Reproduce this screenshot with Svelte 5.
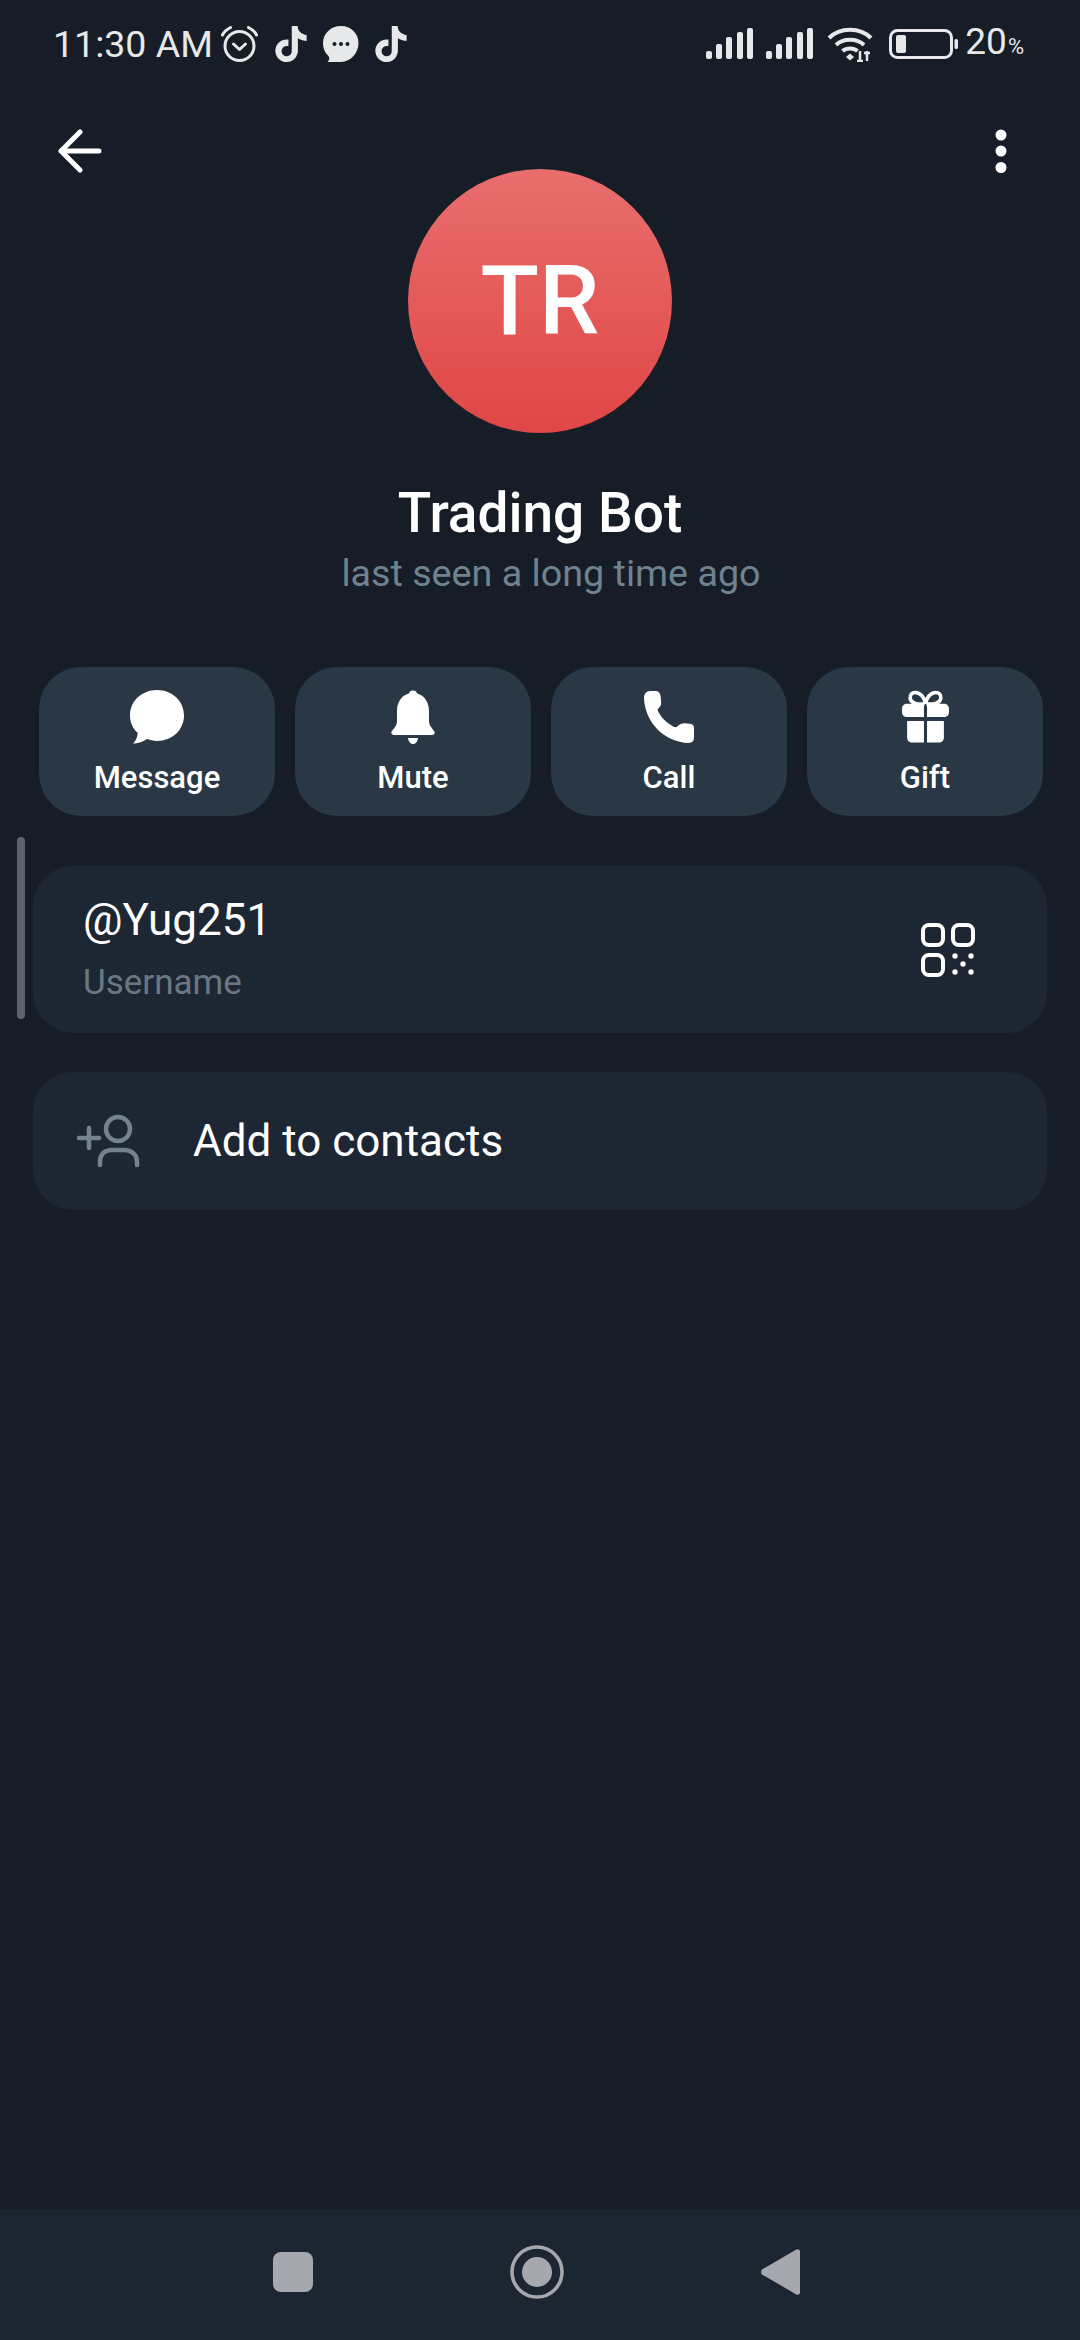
<script>
  const actions = ["Message", "Mute", "Call", "Gift"];
  const tiktok =
    "M12.525.02c1.31-.02 2.61-.01 3.91-.02.08 1.53.63 3.09 1.75 4.17 1.12 1.11 2.7 1.62 4.24 1.79v4.03c-1.44-.05-2.89-.35-4.2-.97-.57-.26-1.1-.59-1.62-.93-.01 2.92.01 5.84-.02 8.75-.08 1.4-.54 2.79-1.35 3.94-1.31 1.92-3.58 3.17-5.91 3.21-1.43.08-2.86-.31-4.08-1.03-2.02-1.19-3.44-3.37-3.65-5.71-.02-.5-.03-1-.01-1.49.18-1.9 1.12-3.72 2.58-4.96 1.66-1.44 3.98-2.13 6.15-1.72.02 1.48-.04 2.96-.04 4.44-.99-.32-2.15-.23-3.02.37-.63.41-1.11 1.04-1.36 1.75-.21.51-.15 1.07-.14 1.61.24 1.64 1.82 3.02 3.5 2.87 1.12-.01 2.19-.66 2.77-1.61.19-.33.4-.67.41-1.06.1-1.79.06-3.57.07-5.36.01-4.03-.01-8.05.02-12.07z";
  const bars = [
    { x: 0, h: 8 },
    { x: 10, h: 15 },
    { x: 20, h: 22 },
    { x: 31, h: 27 },
    { x: 41, h: 31 },
  ];
</script>

<div class="page">
  <div class="status">
    <div class="status-left">
      <span class="time">11:30 AM</span>
      <svg class="alarm" width="39" height="36" viewBox="0 0 38 36" fill="none" stroke="#e6e8ea">
        <circle cx="19" cy="20" r="14.5" stroke-width="3" />
        <path d="M2 9 C4 5 7 3 10 1.5 M36 9 C34 5 31 3 28 1.5" stroke-width="3" stroke-linecap="round" />
        <path d="M13 18 L19 23.5 L25 18" stroke-width="3" stroke-linecap="round" stroke-linejoin="round" />
      </svg>
      <svg class="tt" width="32" height="36" viewBox="1.5 0 21 24" fill="#e6e8ea"><path d={tiktok} /></svg>
      <svg width="36" height="36" viewBox="0 0 36 36">
        <path d="M18 0 C28 0 35.500 7.500 35.500 17 C35.500 27 28 35.500 18 36 H4.500 C6.500 34 6.800 32 5.500 30 C2 27 0 22.500 0 17 C0 7.500 8 0 18 0 Z" fill="#e6e8ea" />
        <circle cx="11.500" cy="18" r="2" fill="#161d26" />
        <circle cx="18" cy="18" r="2" fill="#161d26" />
        <circle cx="24.500" cy="18" r="2" fill="#161d26" />
      </svg>
      <svg class="tt" width="32" height="36" viewBox="1.5 0 21 24" fill="#e6e8ea"><path d={tiktok} /></svg>
    </div>
    <div class="status-right">
      {#each [1, 2] as n (n)}
        <svg class="signal" width="47" height="32" viewBox="0 0 47 32" fill="#e6e8ea">
          {#each bars as b (b.x)}
            <rect x={b.x} y={31 - b.h} width="6" height={b.h} rx="2" />
          {/each}
        </svg>
      {/each}
      <svg class="wifi" width="46" height="36" viewBox="0 0 46 36" fill="none" stroke="#e6e8ea" stroke-width="4">
        <path d="M2 12 C13 1 33 1 44 12" />
        <path d="M9 19 C16 12 30 12 37 19" />
        <path d="M15.500 25 C19.500 21.500 26.500 21.500 30.500 25" />
        <path d="M19 31 L23 27.500 L27 31 L23 34.500 Z" fill="#e6e8ea" stroke="none" />
        <path d="M34 24 V34 M37 34 L31 34 M41 34 V24 M38 26 H44" stroke-width="2.500" transform="translate(-1 1)" />
      </svg>
      <svg class="battery" width="69" height="30" viewBox="0 0 69 30">
        <rect x="1.500" y="1.500" width="61" height="27" rx="7" fill="none" stroke="#e6e8ea" stroke-width="3" />
        <rect x="7" y="6" width="10" height="18" rx="2" fill="#e6e8ea" />
        <rect x="65.500" y="10" width="3.500" height="10" rx="1.500" fill="#e6e8ea" />
      </svg>
      <span class="pct">20<small>%</small></span>
    </div>
  </div>

  <div class="toolbar">
    <svg width="44" height="44" viewBox="0 0 44 44" fill="none" stroke="#fff" stroke-width="5" stroke-linecap="round" stroke-linejoin="round">
      <path d="M3 22 H41 M22 3 L3 22 L22 41" />
    </svg>
    <svg class="more" width="12" height="44" viewBox="0 0 12 44" fill="#fff">
      <circle cx="6" cy="6" r="5.500" />
      <circle cx="6" cy="22" r="5.500" />
      <circle cx="6" cy="38.500" r="5.500" />
    </svg>
  </div>

  <div class="avatar">TR</div>
  <div class="name">Trading Bot</div>
  <div class="seen">last seen a long time ago</div>

  <div class="actions">
    {#each actions as label (label)}
      <div class="action">
        {#if label === "Message"}
          <svg width="54" height="52" viewBox="0 0 52 52" fill="#fff">
            <path d="M26 0 C40.500 0 52 10.500 52 24.500 C52 38.500 40.500 49 26 49 C22.500 49 19.500 48.300 16.500 47.300 C12 50.500 7 51.500 3 51.800 C5.500 49 7 46 7.500 41.500 C2.800 37 0 31.500 0 24.500 C0 10.500 11.500 0 26 0 Z" />
          </svg>
        {:else if label === "Mute"}
          <svg width="44" height="54" viewBox="0 0 44 54" fill="#fff">
            <circle cx="22" cy="4.500" r="4" />
            <path d="M22 3 C32 3 38 11 38 21 V31 C38 35 40 37 43 41 C44.500 43 43.500 45 41 45 H3 C.500 45 -.500 43 1 41 C4 37 6 35 6 31 V21 C6 11 12 3 22 3 Z" />
            <path d="M17 48 H27 C26.500 52 24.500 54 22 54 C19.500 54 17.500 52 17 48 Z" />
          </svg>
        {:else if label === "Call"}
          <svg width="50" height="50" viewBox="0 0 48 50" fill="#fff">
            <path d="M6 0 H11 C14 0 15.500 2 16 5 L16.500 11 C16.700 14 15 15.500 13.500 17 C13 18 13.200 19 14 20.500 C17 26 22 31 28 34 C30 35 31 35 32 34 C34 32 36 31 39 31 L44 31.500 C47 32 48 33 48 36 V45 C48 48 46 50 43 50 C19 49 1 30 0 7 C0 3 2 0 6 0 Z" />
          </svg>
        {:else}
          <svg width="47" height="50" viewBox="0 0 46 50">
            <path d="M22 12 C16 13 9 12 8 7 C7.500 3 10 1 13 1 C18 1 22 6 23 12 C24 6 28 1 33 1 C36 1 38.500 3 38 7 C37 12 30 13 24 12" fill="none" stroke="#fff" stroke-width="3.500" />
            <path d="M5 12 H21.500 V25 H5 C2 25 0 23 0 20 V17 C0 14 2 12 5 12 Z M24.500 12 H41 C44 12 46 14 46 17 V20 C46 23 44 25 41 25 H24.500 Z" fill="#fff" />
            <path d="M5 29 H21.500 V50 H10 C7 50 5 48 5 45 Z M24.500 29 H41 V45 C41 48 39 50 36 50 H24.500 Z" fill="#fff" />
          </svg>
        {/if}
        <span>{label}</span>
      </div>
    {/each}
  </div>

  <div class="card username">
    <div class="username-text">
      <div class="handle">@Yug251</div>
      <div class="caption">Username</div>
    </div>
    <svg width="54" height="54" viewBox="0 0 54 54" fill="none" stroke="#fff" stroke-width="4">
      <rect x="2" y="2" width="20" height="20" rx="6" />
      <rect x="32" y="2" width="20" height="20" rx="6" />
      <rect x="2" y="32" width="20" height="20" rx="6" />
      <g fill="#fff" stroke="none">
        <circle cx="34" cy="33" r="2.700" />
        <circle cx="50" cy="33" r="2.700" />
        <circle cx="42" cy="41" r="2.700" />
        <circle cx="34" cy="49" r="2.700" />
        <circle cx="50" cy="49" r="2.700" />
      </g>
    </svg>
  </div>

  <div class="card contacts">
    <svg width="64" height="54" viewBox="0 0 62 54" fill="none" stroke="#74828f" stroke-width="4.500" stroke-linecap="round">
      <circle cx="40" cy="15" r="12" />
      <path d="M22 51 V48 C22 40 27 36 34 36 H46 C53 36 59 40 59 48 V51" />
      <path d="M1 24 H21 M11 14 V34" />
    </svg>
    <span>Add to contacts</span>
  </div>

  <div class="scrollbar"></div>

  <div class="navbar">
    <svg width="40" height="40" viewBox="0 0 40 40"><rect width="40" height="40" rx="8" fill="#a5a9ae" /></svg>
    <svg width="54" height="54" viewBox="0 0 54 54" fill="#a5a9ae">
      <circle cx="27" cy="27" r="25" fill="none" stroke="#a5a9ae" stroke-width="3.500" />
      <circle cx="27" cy="27" r="15" />
    </svg>
    <svg width="39" height="46" viewBox="0 0 39 46" fill="#a5a9ae">
      <path d="M1 20.500 L35 .800 C37 -.500 39 .500 39 2.500 V43.500 C39 45.500 37 46.500 35 45.200 L1 25.500 C-.300 24 -.300 22 1 20.500 Z" />
    </svg>
  </div>
</div>

<style>
  :global(body) {
    margin: 0;
    background: #161d26;
  }
  .page {
    position: relative;
    width: 1080px;
    height: 2340px;
    display: flex;
    flex-direction: column;
    background: #161d26;
    color: #fff;
    font-family: Roboto, "Noto Sans", sans-serif;
    overflow: hidden;
  }
  .status {
    height: 100px;
    box-sizing: border-box;
    display: flex;
    justify-content: space-between;
    align-items: flex-start;
    padding: 26px 56px 0 53px;
    color: #e6e8ea;
  }
  .status-left,
  .status-right {
    display: flex;
    align-items: center;
    height: 36px;
  }
  .time {
    font-size: 37.5px;
    line-height: 36px;
    margin-right: 7px;
  }
  .status-left svg + svg {
    margin-left: 16px;
  }
  .signal + .signal {
    margin-left: 13px;
  }
  .wifi {
    margin-left: 14px;
  }
  .battery {
    margin-left: 16px;
  }
  .pct {
    font-size: 37px;
    line-height: 36px;
    margin-left: 7px;
  }
  .pct small {
    font-size: 22px;
    margin-left: 1px;
  }
  .toolbar {
    height: 69px;
    box-sizing: border-box;
    display: flex;
    justify-content: space-between;
    align-items: flex-start;
    padding: 29px 73px 0 58px;
  }
  .avatar {
    width: 264px;
    height: 264px;
    flex: none;
    align-self: center;
    border-radius: 50%;
    display: flex;
    align-items: center;
    justify-content: center;
    background: linear-gradient(#e96e6e, #e04646);
    font-size: 96px;
    font-weight: 500;
  }
  .name {
    margin-top: 50px;
    text-align: center;
    font-size: 55px;
    line-height: 60px;
    font-weight: 500;
  }
  .seen {
    margin-top: 7px;
    padding-left: 22px;
    text-align: center;
    font-size: 37.7px;
    line-height: 46px;
    color: #6f8290;
  }
  .actions {
    display: grid;
    grid-template-columns: repeat(4, 236px);
    gap: 20px;
    margin-top: 71px;
    padding-left: 39px;
  }
  .action {
    height: 149px;
    box-sizing: border-box;
    padding-top: 23px;
    border-radius: 42px;
    background: #2a3744;
    display: flex;
    flex-direction: column;
    align-items: center;
    font-size: 31px;
    font-weight: 500;
  }
  .action svg {
    height: 54px;
    flex: none;
  }
  .action span {
    margin-top: 16px;
    line-height: 36px;
  }
  .card {
    width: 1014px;
    margin-left: 33px;
    box-sizing: border-box;
    border-radius: 40px;
    background: #1d2733;
    display: flex;
    align-items: center;
  }
  .username {
    height: 167px;
    margin-top: 50px;
    padding: 0 72px 0 50px;
    justify-content: space-between;
  }
  .handle {
    font-size: 44px;
    line-height: 50px;
  }
  .caption {
    margin-top: 17px;
    font-size: 35px;
    line-height: 42px;
    color: #6b7883;
  }
  .contacts {
    height: 138px;
    margin-top: 39px;
    padding-left: 44px;
    gap: 52px;
    font-size: 44px;
  }
  .scrollbar {
    position: absolute;
    left: 17px;
    top: 837px;
    width: 8px;
    height: 182px;
    border-radius: 4px;
    background: #5b636d;
  }
  .navbar {
    margin-top: auto;
    height: 131px;
    box-sizing: border-box;
    padding: 0 0 5px 273px;
    display: flex;
    align-items: center;
    gap: 197px;
    background: #1b2630;
  }
</style>
